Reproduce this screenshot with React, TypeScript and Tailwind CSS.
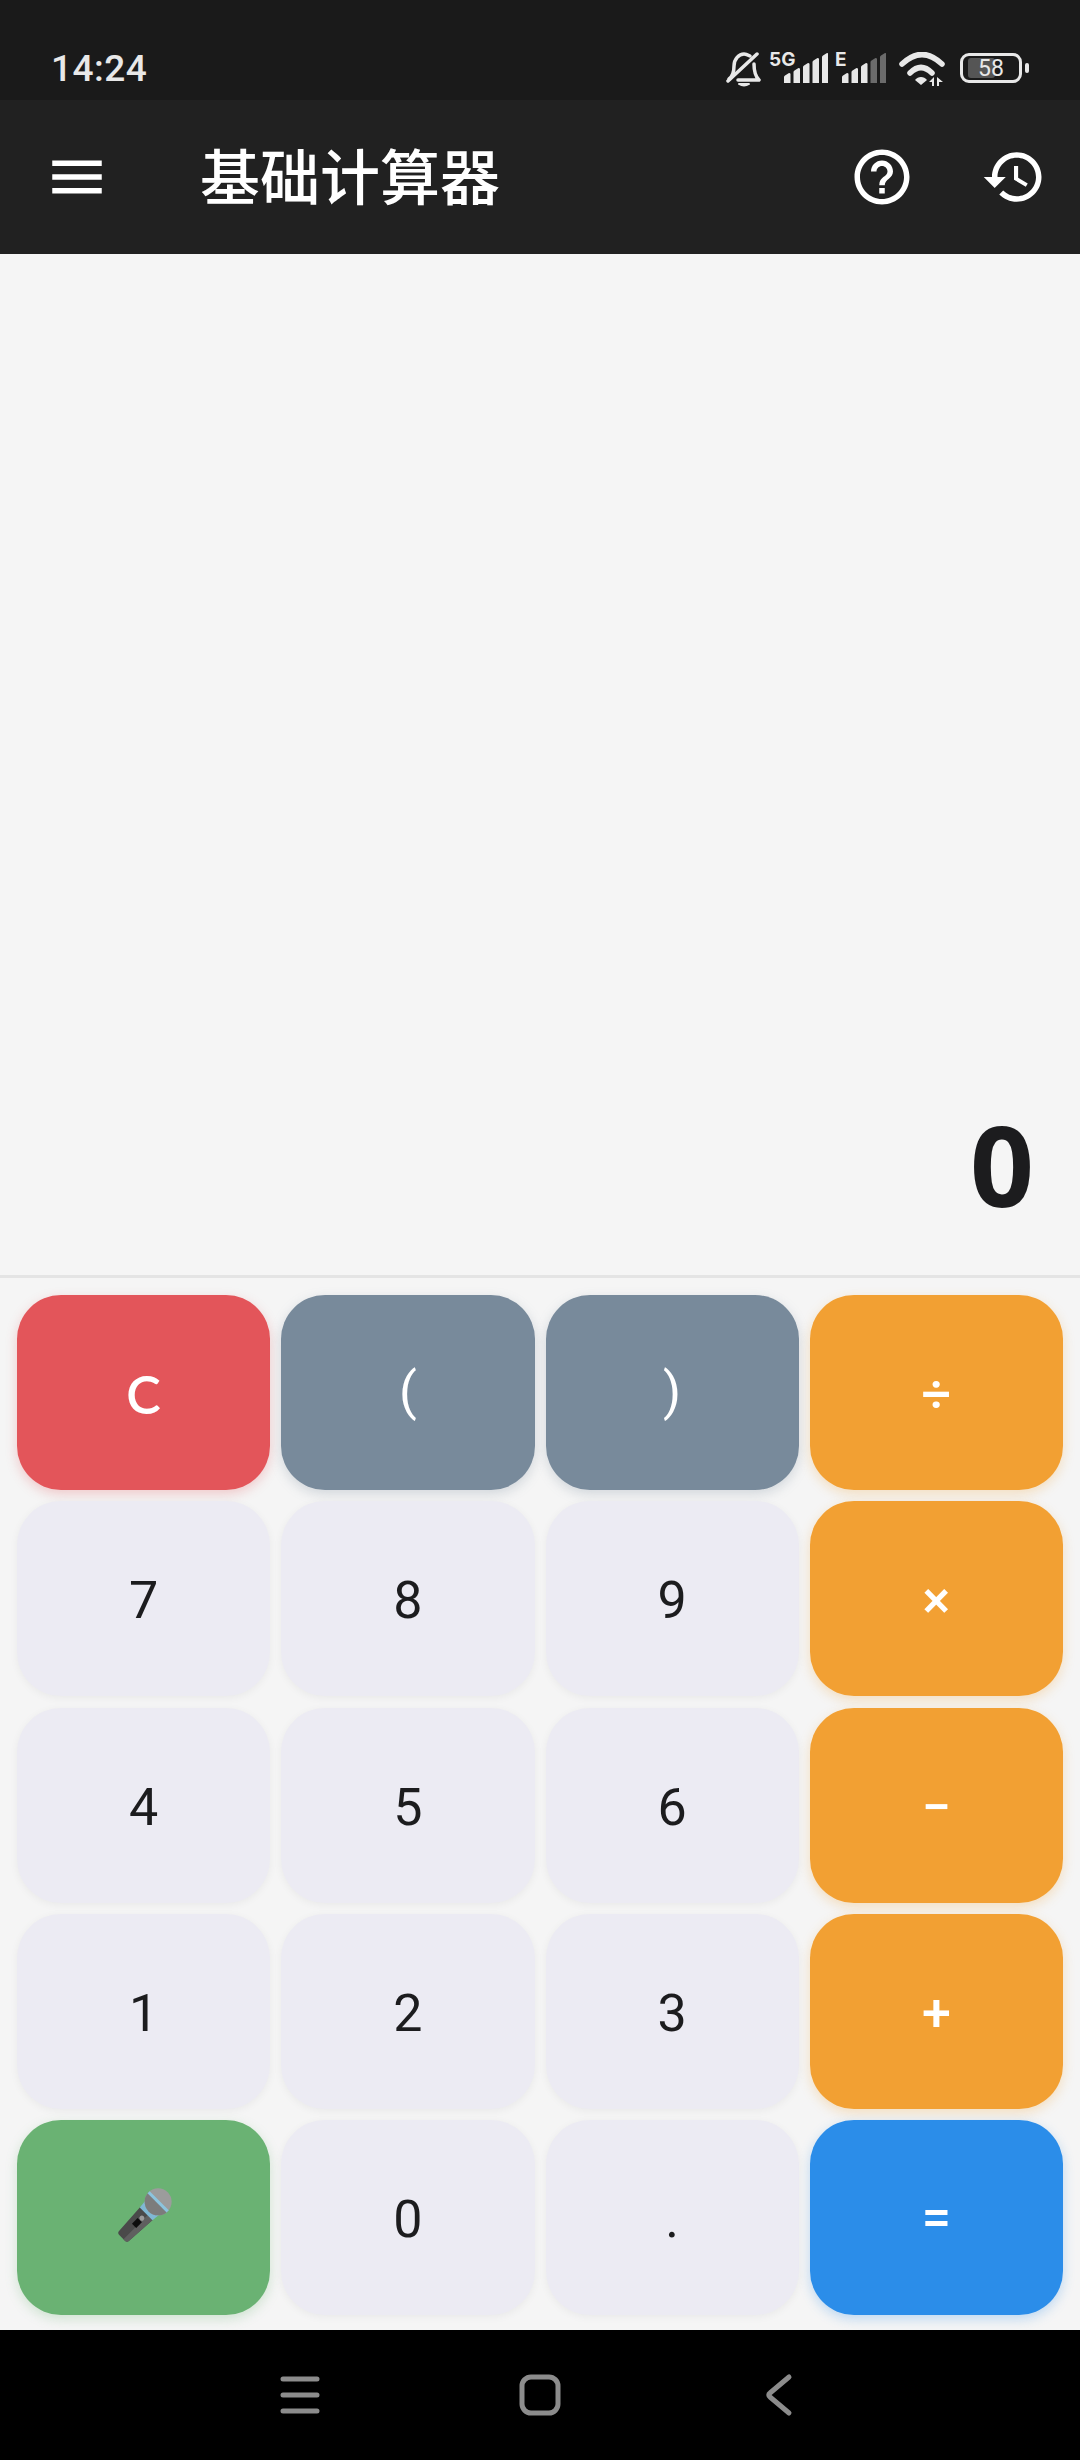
import React from 'react';

const amber = 'bg-[#f2a033] pt-[5px] text-white font-medium shadow-[0_4px_12px_rgba(242,160,51,0.28)]';
const slate = 'bg-[#788a9b] pb-[2px] text-white font-normal shadow-[0_4px_12px_rgba(120,138,155,0.28)]';
const digit = 'bg-[#ecebf3] pt-[5px] text-[#1c1c1e] font-normal shadow-[0_2px_8px_rgba(0,0,0,0.05)]';

const keys: { label: React.ReactNode; tone: string }[] = [
  { label: 'C', tone: "bg-[#e3555a] pt-[2px] font-['Lato',sans-serif] text-white font-semibold shadow-[0_4px_12px_rgba(228,85,91,0.28)]" },
  { label: '(', tone: slate },
  { label: ')', tone: slate },
  { label: '÷', tone: amber },
  { label: '7', tone: digit },
  { label: '8', tone: digit },
  { label: '9', tone: digit },
  { label: '×', tone: amber },
  { label: '4', tone: digit },
  { label: '5', tone: digit },
  { label: '6', tone: digit },
  { label: '−', tone: amber },
  { label: '1', tone: digit },
  { label: '2', tone: digit },
  { label: '3', tone: digit },
  { label: '+', tone: amber },
  { label: <MicIcon />, tone: 'bg-[#6ab273] pb-[3px] shadow-[0_4px_12px_rgba(106,178,115,0.28)]' },
  { label: '0', tone: digit },
  { label: '.', tone: digit },
  { label: '=', tone: 'bg-[#2b8de9] text-white font-medium shadow-[0_4px_12px_rgba(43,141,233,0.28)]' },
];

function MicIcon() {
  return (
    <svg width="64" height="64" viewBox="-32 -32 64 64">
      <g transform="rotate(45)">
        <path d="M-9 -4 L9 -4 L7 28 Q7 31 4 31 L-4 31 Q-7 31 -7 28 Z" fill="#4a4a4a" />
        <path d="M2 -4 L9 -4 L7 28 Q7 31 4 31 L2 31 Z" fill="#5f5f5f" />
        <rect x="-3" y="6" width="6" height="8" fill="#0d0d0d" />
        <circle cx="0" cy="3" r="2.5" fill="#9a9a9a" />
        <path d="M-10 -14 L10 -14 L9 -3 L-9 -3 Z" fill="#7fb8d4" />
        <circle cx="0" cy="-20" r="13.5" fill="#9c9c9c" />
        <path d="M-13.5 -20 A13.5 13.5 0 0 0 13.5 -20 Z" fill="#7c7c7c" />
        <rect x="-13.5" y="-21.5" width="27" height="3" fill="#8cc4de" />
      </g>
    </svg>
  );
}

// Signal strength with its network label sitting over the short bars
function SignalIcon({ label, barsX, width, dim }: { label: string; barsX: number; width: number; dim: number }) {
  const bars = [8, 13, 18, 23, 28];
  return (
    <svg width={width} height="52" viewBox={`0 -16 ${width} 52`} className="mt-[-16px] block">
      <text x="0" y="14" fontSize="19" fontWeight="700" fill="#e8e8e8" fontFamily="Inter, sans-serif">
        {label}
      </text>
      {bars.map((h, i) => {
        const x = barsX + i * 9.5;
        return (
          <path
            key={i}
            d={`M${x} 31 V${33 - h} Q${x} ${32 - h} ${x + 1} ${31.5 - h} L${x + 5} ${29 - h} Q${x + 6.5} ${29 - h} ${x + 6.5} ${30 - h} V31 Z`}
            fill={i >= bars.length - dim ? '#6b6b6b' : '#e8e8e8'}
          />
        );
      })}
    </svg>
  );
}

function StatusIcons() {
  return (
    <div className="flex items-start pt-[52px]">
      {/* muted bell */}
      <svg width="35" height="36" viewBox="0 0 35 36" fill="none" stroke="#e8e8e8" strokeWidth="3.5" className="block" strokeLinecap="round" strokeLinejoin="round">
        <path d="M3 27 C7 24 8 20 8 14 C8 7 13 2 18 2 C20 2 22 3 24 4" />
        <path d="M28 12 C28 20 29 24 33 28 L12 28" />
        <path d="M2 29 L31 2" />
        <path d="M13 32 Q18 35 23 32 Z" fill="#e8e8e8" strokeWidth="2" />
      </svg>
      <div className="ml-[8px]">
        <SignalIcon label="5G" barsX={15} width={59} dim={0} />
      </div>
      <div className="ml-[7px]">
        <SignalIcon label="E" barsX={7} width={51} dim={2} />
      </div>
      {/* wifi with activity arrows */}
      <svg width="48" height="36" viewBox="0 0 48 36" fill="none" className="ml-[13px] block">
        <path d="M3 12 Q23 -7 43 12" stroke="#e8e8e8" strokeWidth="5.5" strokeLinecap="round" />
        <path d="M11 21 Q22 10 33 21" stroke="#e8e8e8" strokeWidth="5.5" strokeLinecap="round" />
        <path d="M16 28 L22 33 L28 28 C25 24 19 24 16 28 Z" fill="#e8e8e8" />
        <path d="M30 30 L35 25 L35 34 L33 34 L33 30 Z M38 25 L38 34 L40 34 L40 30 L44 30 Z" fill="#e8e8e8" />
      </svg>
      <div className="ml-[13px] mt-[1px] flex items-center">
        <div className="relative h-[30px] w-[62px] rounded-[9px] border-[3px] border-[#e8e8e8]">
          <div className="absolute left-[5px] top-[2px] h-[20px] w-[27px] rounded-[3px] bg-[#555555]" />
          <span className="absolute inset-0 flex items-center justify-center text-[23px] leading-none text-[#e8e8e8]">58</span>
        </div>
        <div className="ml-[3px] h-[10px] w-[4px] rounded-[2px] bg-[#e8e8e8]" />
      </div>
    </div>
  );
}

export default function App() {
  return (
    <div className="flex h-[2460px] w-[1080px] flex-col overflow-hidden bg-[#f5f5f5] font-['Roboto',sans-serif]">
      <div className="flex h-[100px] items-start justify-between bg-[#1a1a1a] pl-[51px] pr-[51px]">
        <span className="pt-[47px] text-[37px] font-medium leading-[44px] tracking-[0.5px] text-[#e8e8e8]">14:24</span>
        <StatusIcons />
      </div>

      <header className="flex h-[154px] items-center bg-[#212121] pl-[44px] pr-[33px] text-white">
        <svg width="66" height="66" viewBox="0 0 24 24" fill="currentColor">
          <path d="M3 18h18v-2H3v2zm0-5h18v-2H3v2zm0-7v2h18V6H3z" />
        </svg>
        <h1 className="ml-[90px] flex-1 pb-[6px] font-['Noto_Sans_CJK_SC',sans-serif] text-[60px] font-medium leading-none">基础计算器</h1>
        <div className="flex items-center gap-[66px]">
          <svg width="66" height="66" viewBox="0 0 24 24" fill="currentColor">
            <path d="M11 18h2v-2h-2v2zm1-16C6.48 2 2 6.48 2 12s4.48 10 10 10 10-4.48 10-10S17.52 2 12 2zm0 18c-4.41 0-8-3.59-8-8s3.59-8 8-8 8 3.59 8 8-3.59 8-8 8zm0-14c-2.21 0-4 1.79-4 4h2c0-1.1.9-2 2-2s2 .9 2 2c0 2-3 1.75-3 5h2c0-2.25 3-2.5 3-5 0-2.21-1.79-4-4-4z" />
          </svg>
          <svg width="66" height="66" viewBox="0 0 24 24" fill="currentColor">
            <path d="M13 3c-4.97 0-9 4.03-9 9H1l3.89 3.89.07.14L9 12H6c0-3.87 3.13-7 7-7s7 3.13 7 7-3.13 7-7 7c-1.93 0-3.68-.79-4.94-2.06l-1.42 1.42C8.27 19.99 10.51 21 13 21c4.97 0 9-4.03 9-9s-4.03-9-9-9zm-1 5v5l4.28 2.54.72-1.21-3.5-2.08V8H12z" />
          </svg>
        </div>
      </header>

      <div className="flex flex-1 items-end justify-end pb-[55px] pr-[46px]">
        <span className="font-['Noto_Sans',sans-serif] text-[112px] font-bold leading-none text-[#1c1c1e]">0</span>
      </div>

      <div className="grid grid-cols-4 grid-rows-[repeat(5,195px)] gap-x-[11px] gap-y-[11.25px] border-t-[3px] border-[#e4e4e4] px-[17px] pb-[15px] pt-[17px]">
        {keys.map((key, i) => (
          <button key={i} className={`flex items-center justify-center rounded-[44px] text-[52px] leading-none ${key.tone}`}>
            {key.label}
          </button>
        ))}
      </div>

      <nav className="flex h-[130px] items-center justify-center gap-[192px] bg-black">
        <svg width="48" height="48" viewBox="0 0 48 48" stroke="#8c8c8c" strokeWidth="5" strokeLinecap="round">
          <path d="M7 8h34M7 24h34M7 40h34" />
        </svg>
        <svg width="48" height="48" viewBox="0 0 48 48" fill="none" stroke="#8c8c8c" strokeWidth="5">
          <rect x="6" y="6" width="36" height="36" rx="9" />
        </svg>
        <svg width="48" height="48" viewBox="0 0 48 48" fill="none" stroke="#8c8c8c" strokeWidth="5" strokeLinecap="round" strokeLinejoin="round">
          <path d="M33 6 L14 22 Q11.5 24 14 26 L33 42" />
        </svg>
      </nav>
    </div>
  );
}
